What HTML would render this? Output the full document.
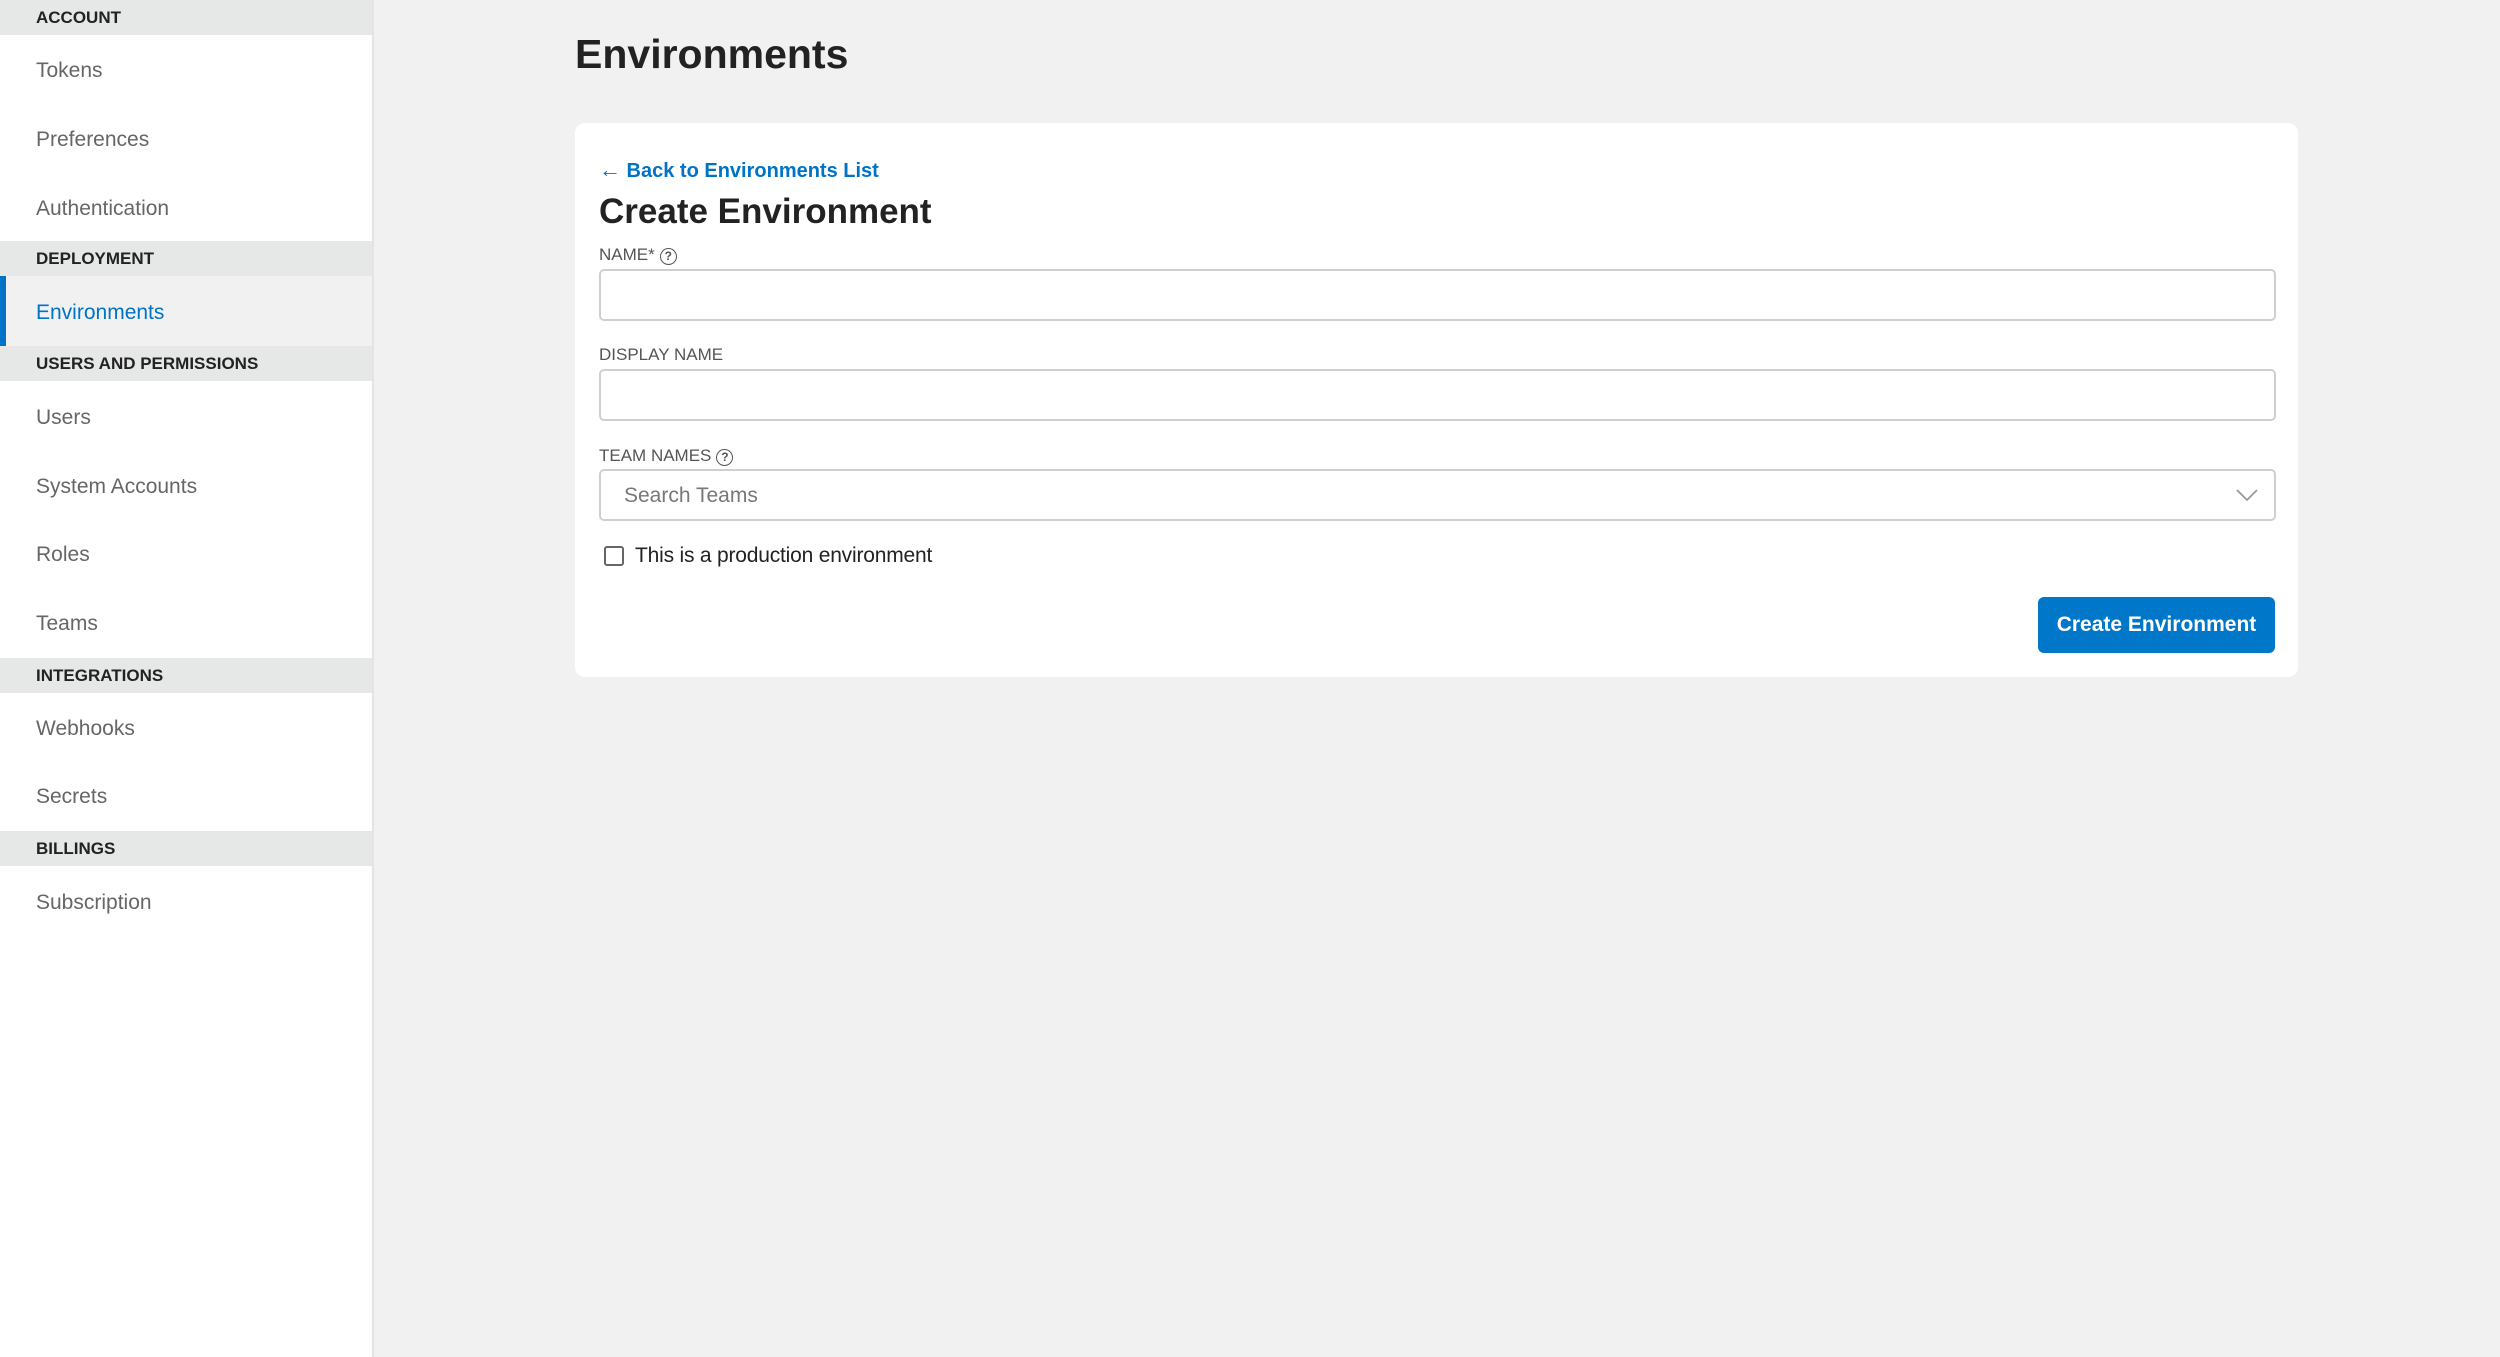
<!DOCTYPE html>
<html><head><meta charset="utf-8"><style>
*{box-sizing:border-box;margin:0;padding:0}
body{width:2500px;height:1357px;background:#f0f1f0;font-family:"Liberation Sans",sans-serif;position:relative;overflow:hidden;color:#222}
.sb{position:absolute;left:0;top:0;width:374px;height:1357px;background:#fff;border-right:2px solid #e3e4e4}
.h{position:absolute;left:0;width:372px;height:35px;background:#e6e7e7;font-size:17px;font-weight:bold;color:#222;padding-left:36px;line-height:35px}
.i{position:absolute;left:36px;font-size:21px;color:#666;line-height:30px;margin-top:-13px}
.act{position:absolute;left:0;top:276px;width:372px;height:70px;background:#f0f1f0;border-left:6px solid #0073c6}
.card{position:absolute;left:575px;top:123px;width:1723px;height:554px;background:#fff;border-radius:10px}
.lbl{position:absolute;left:599px;font-size:17px;color:#555;line-height:20px;margin-top:-8px}
.inp{position:absolute;left:599px;width:1677px;height:52px;border:2px solid #cdd0d2;border-radius:5px;background:#fff}
.q{display:inline-block;width:17px;height:17px;border:1.6px solid #555;border-radius:50%;font-size:12px;text-align:center;line-height:14px;vertical-align:0px;margin-left:5px;font-weight:bold}
</style></head><body>
<div class="sb">
<div class="h" style="top:0">ACCOUNT</div>
<div class="i" style="top:69px">Tokens</div>
<div class="i" style="top:138px">Preferences</div>
<div class="i" style="top:207px">Authentication</div>
<div class="h" style="top:241px">DEPLOYMENT</div>
<div class="act"></div>
<div class="i" style="top:311px;color:#0073c6">Environments</div>
<div class="h" style="top:346px">USERS AND PERMISSIONS</div>
<div class="i" style="top:416px">Users</div>
<div class="i" style="top:485px">System Accounts</div>
<div class="i" style="top:553px">Roles</div>
<div class="i" style="top:622px">Teams</div>
<div class="h" style="top:658px">INTEGRATIONS</div>
<div class="i" style="top:727px">Webhooks</div>
<div class="i" style="top:795px">Secrets</div>
<div class="h" style="top:831px">BILLINGS</div>
<div class="i" style="top:901px">Subscription</div>
</div>
<div style="position:absolute;left:575px;top:31px;font-size:41px;font-weight:bold;color:#222">Environments</div>
<div class="card"></div>
<div style="position:absolute;left:599px;top:157px;font-size:20px;font-weight:bold;color:#0073c6"><span style="font-size:22px">←</span> Back to Environments List</div>
<div style="position:absolute;left:599px;top:192px;font-size:35px;font-weight:bold;color:#222">Create Environment</div>
<div class="lbl" style="top:253px">NAME*<span class="q">?</span></div>
<div class="inp" style="top:269px"></div>
<div class="lbl" style="top:353px">DISPLAY NAME</div>
<div class="inp" style="top:369px"></div>
<div class="lbl" style="top:454px">TEAM NAMES<span class="q">?</span></div>
<div class="inp" style="top:469px"></div>
<div style="position:absolute;left:624px;top:484px;font-size:21px;color:#777">Search Teams</div>
<svg style="position:absolute;left:2236px;top:488px" width="22" height="14"><path d="M1 2 L11 12 L21 2" fill="none" stroke="#999" stroke-width="1.8"/></svg>
<div style="position:absolute;left:604px;top:546px;width:20px;height:20px;border:2px solid #666;border-radius:3px"></div>
<div style="position:absolute;left:635px;top:544px;font-size:21px;color:#222;letter-spacing:-0.2px">This is a production environment</div>
<div style="position:absolute;left:2038px;top:597px;width:237px;height:56px;background:#0077c8;border-radius:6px;color:#fff;font-size:21px;font-weight:bold;text-align:center;line-height:56px">Create Environment</div>
</body></html>
